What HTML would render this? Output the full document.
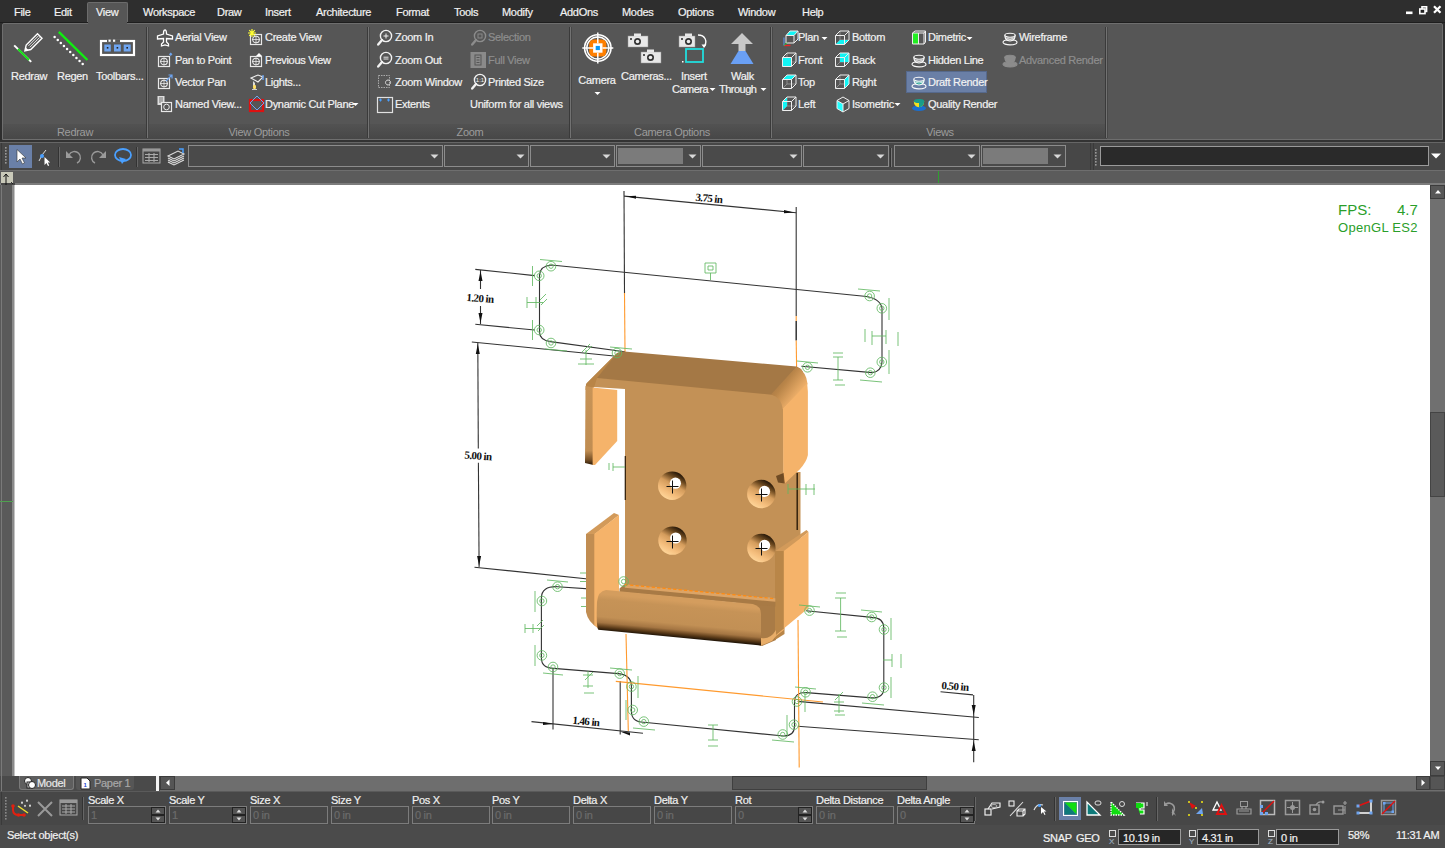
<!DOCTYPE html><html><head><meta charset="utf-8"><style>
*{margin:0;padding:0;box-sizing:border-box}
html,body{width:1445px;height:848px;overflow:hidden;background:#2e2e2e;font-family:"Liberation Sans",sans-serif;font-size:11px;color:#f2f2f2}
.a{position:absolute}
.t{position:absolute;white-space:nowrap;letter-spacing:-0.3px;line-height:12px;-webkit-text-stroke:0.2px currentColor}
.dis{color:#8e8e8e}
.gl{position:absolute;white-space:nowrap;color:#9c9c9c;letter-spacing:-0.3px;line-height:12px}
svg{position:absolute;overflow:visible}
</style></head><body><div class="a" style="left:0px;top:0px;width:1445px;height:24px;background:#2e2e2e"></div><div class="a" style="left:87px;top:2px;width:41px;height:22px;background:#565656;border:1px solid #6c6c6c;border-bottom:none;border-radius:2px 2px 0 0"></div><div class="t" style="left:14px;top:6px;">File</div><div class="t" style="left:54px;top:6px;">Edit</div><div class="t" style="left:96px;top:6px;">View</div><div class="t" style="left:143px;top:6px;">Workspace</div><div class="t" style="left:217px;top:6px;">Draw</div><div class="t" style="left:265px;top:6px;">Insert</div><div class="t" style="left:316px;top:6px;">Architecture</div><div class="t" style="left:396px;top:6px;">Format</div><div class="t" style="left:454px;top:6px;">Tools</div><div class="t" style="left:502px;top:6px;">Modify</div><div class="t" style="left:560px;top:6px;">AddOns</div><div class="t" style="left:622px;top:6px;">Modes</div><div class="t" style="left:678px;top:6px;">Options</div><div class="t" style="left:738px;top:6px;">Window</div><div class="t" style="left:802px;top:6px;">Help</div><svg style="left:1400px;top:0px" width="45" height="20" viewBox="0 0 45 20"><rect x="6" y="11.5" width="6.5" height="2.6" fill="#fff"/><rect x="22" y="6.8" width="4.6" height="4.6" fill="none" stroke="#fff" stroke-width="1.6"/><rect x="19.8" y="9" width="5.2" height="4.6" fill="#222" stroke="#fff" stroke-width="1.6"/><path d="M34 6.2 L40.5 12.8 M40.5 6.2 L34 12.8" stroke="#fff" stroke-width="2.2"/></svg><div class="a" style="left:0px;top:22px;width:1445px;height:1px;background:#1e1e1e"></div><div class="a" style="left:2px;top:23px;width:1441px;height:117px;background:#565656;border:1px solid #6e6e6e;border-radius:2px 2px 0 0"></div><div class="a" style="left:88px;top:22px;width:39px;height:3px;background:#565656"></div><div class="a" style="left:3px;top:124px;width:1104px;height:15px;background:linear-gradient(#525252,#474747)"></div><div class="a" style="left:146px;top:27px;width:1px;height:111px;background:#3a3a3a"></div><div class="a" style="left:147px;top:27px;width:1px;height:111px;background:#727272"></div><div class="a" style="left:148px;top:27px;width:1px;height:111px;background:#474747"></div><div class="a" style="left:367px;top:27px;width:1px;height:111px;background:#3a3a3a"></div><div class="a" style="left:368px;top:27px;width:1px;height:111px;background:#727272"></div><div class="a" style="left:369px;top:27px;width:1px;height:111px;background:#474747"></div><div class="a" style="left:569px;top:27px;width:1px;height:111px;background:#3a3a3a"></div><div class="a" style="left:570px;top:27px;width:1px;height:111px;background:#727272"></div><div class="a" style="left:571px;top:27px;width:1px;height:111px;background:#474747"></div><div class="a" style="left:770px;top:27px;width:1px;height:111px;background:#3a3a3a"></div><div class="a" style="left:771px;top:27px;width:1px;height:111px;background:#727272"></div><div class="a" style="left:772px;top:27px;width:1px;height:111px;background:#474747"></div><div class="a" style="left:1105px;top:27px;width:1px;height:111px;background:#3a3a3a"></div><div class="a" style="left:1106px;top:27px;width:1px;height:111px;background:#727272"></div><div class="a" style="left:1107px;top:27px;width:1px;height:111px;background:#474747"></div><div class="gl" style="left:15px;top:126px;width:120px;text-align:center">Redraw</div><div class="gl" style="left:199px;top:126px;width:120px;text-align:center">View Options</div><div class="gl" style="left:410px;top:126px;width:120px;text-align:center">Zoom</div><div class="gl" style="left:612px;top:126px;width:120px;text-align:center">Camera Options</div><div class="gl" style="left:880px;top:126px;width:120px;text-align:center">Views</div><svg style="left:10px;top:30px" width="38" height="36" viewBox="0 0 38 36"><line x1="4.2" y1="15.4" x2="21.2" y2="31.9" stroke="#fff" stroke-width="2"/><line x1="8" y1="19" x2="19" y2="30" stroke="#11dd11" stroke-width="2"/><g transform="translate(14.9,20.8) rotate(-45)"><path d="M0 0 L5 -3.2 L21 -3.2 L21 3.2 L5 3.2 Z" fill="#565656" stroke="#fff" stroke-width="1.4"/><line x1="6" y1="-1" x2="20" y2="-1" stroke="#fff" stroke-width="0.8"/><line x1="6" y1="1" x2="20" y2="1" stroke="#fff" stroke-width="0.8"/><path d="M0 0 L3 -2 L3 2Z" fill="#fff"/></g></svg><svg style="left:50px;top:28px" width="42" height="40" viewBox="0 0 42 40"><circle cx="4.60" cy="8.90" r="1.25" fill="#fff"/><circle cx="7.72" cy="11.92" r="1.25" fill="#fff"/><circle cx="10.84" cy="14.94" r="1.25" fill="#fff"/><circle cx="13.96" cy="17.96" r="1.25" fill="#fff"/><circle cx="17.08" cy="20.98" r="1.25" fill="#fff"/><circle cx="20.20" cy="24.00" r="1.25" fill="#fff"/><circle cx="23.32" cy="27.02" r="1.25" fill="#fff"/><circle cx="26.44" cy="30.04" r="1.25" fill="#fff"/><circle cx="29.56" cy="33.06" r="1.25" fill="#fff"/><circle cx="32.68" cy="36.08" r="1.25" fill="#fff"/><line x1="8.8" y1="3.9" x2="37.4" y2="32" stroke="#11ee11" stroke-width="2.4"/></svg><svg style="left:98px;top:36px" width="40" height="24" viewBox="0 0 40 24"><rect x="3" y="5" width="33" height="14" fill="none" stroke="#fff" stroke-width="2.2"/><rect x="9" y="3.5" width="13" height="3" fill="#565656"/><rect x="10.5" y="3.6" width="2.2" height="2.2" fill="#fff"/><rect x="15" y="3.6" width="2.2" height="2.2" fill="#fff"/><rect x="6.3" y="8.5" width="6.5" height="7" fill="#6fa5f0"/><rect x="16" y="8.5" width="6.8" height="7" fill="#6fa5f0"/><rect x="25.7" y="8.5" width="7" height="7" fill="#6fa5f0"/><rect x="8.8" y="11" width="1.6" height="1.6" fill="#222"/><rect x="18.6" y="11" width="1.6" height="1.6" fill="#222"/><rect x="28.4" y="11" width="1.6" height="1.6" fill="#222"/></svg><div class="t" style="left:11px;top:70px;">Redraw</div><div class="t" style="left:57px;top:70px;">Regen</div><div class="t" style="left:96px;top:70px;">Toolbars...</div><svg style="left:156px;top:29px" width="18" height="18" viewBox="0 0 18 18"><path d="M9 1 C10.5 1 10.5 3 10.5 5 L16.5 7 L16.5 10 L10.5 9.5 L10.5 13 L12.5 15 L12.5 17 L9 16 L5.5 17 L5.5 15 L7.5 13 L7.5 9.5 L1.5 10 L1.5 7 L7.5 5 C7.5 3 7.5 1 9 1Z" fill="#565656" stroke="#fff" stroke-width="1.3"/></svg><div class="t" style="left:175px;top:31.2px;">Aerial View</div><svg style="left:156px;top:51px" width="18" height="18" viewBox="0 0 18 18"><rect x="2.5" y="5.5" width="11" height="10" fill="none" stroke="#e8e8e8" stroke-width="1.2"/><circle cx="8" cy="10.5" r="3.3" fill="none" stroke="#e8e8e8" stroke-width="1.1"/><path d="M8 6.5V14.5M4 10.5H12" stroke="#e8e8e8" stroke-width="0.8"/><rect x="13.5" y="2" width="2.5" height="2.5" fill="#6fa5f0" transform="rotate(45 14.7 3.2)"/></svg><div class="t" style="left:175px;top:53.6px;">Pan to Point</div><svg style="left:156px;top:73px" width="18" height="18" viewBox="0 0 18 18"><rect x="2.5" y="5.5" width="11" height="10" fill="none" stroke="#e8e8e8" stroke-width="1.2"/><circle cx="8" cy="10.5" r="3.3" fill="none" stroke="#e8e8e8" stroke-width="1.1"/><path d="M8 6.5V14.5M4 10.5H12" stroke="#e8e8e8" stroke-width="0.8"/><path d="M10 8 L16 2 M12.5 2 H16 V5.5" stroke="#6fa5f0" stroke-width="1.2" fill="none"/></svg><div class="t" style="left:175px;top:76px;">Vector Pan</div><svg style="left:156px;top:95px" width="18" height="18" viewBox="0 0 18 18"><rect x="1.5" y="1" width="7" height="9" fill="#ddd"/><path d="M3 3H7M3 5H7M3 7H7" stroke="#555" stroke-width="0.8"/><rect x="5.5" y="7.5" width="10" height="9" fill="#565656" stroke="#e8e8e8" stroke-width="1.2"/><circle cx="10.5" cy="12" r="2.8" fill="none" stroke="#e8e8e8"/></svg><div class="t" style="left:175px;top:98.4px;">Named View...</div><svg style="left:248px;top:29px" width="18" height="18" viewBox="0 0 18 18"><rect x="2.5" y="5.5" width="11" height="10" fill="none" stroke="#e8e8e8" stroke-width="1.2"/><circle cx="8" cy="10.5" r="3.3" fill="none" stroke="#e8e8e8" stroke-width="1.1"/><path d="M8 6.5V14.5M4 10.5H12" stroke="#e8e8e8" stroke-width="0.8"/><g stroke="#ffff33" stroke-width="1.2"><path d="M4 0V8M0 4H8M1.2 1.2L6.8 6.8M6.8 1.2L1.2 6.8"/></g></svg><div class="t" style="left:265px;top:31.2px;">Create View</div><svg style="left:248px;top:51px" width="18" height="18" viewBox="0 0 18 18"><rect x="2.5" y="5.5" width="11" height="10" fill="none" stroke="#e8e8e8" stroke-width="1.2"/><circle cx="8" cy="10.5" r="3.3" fill="none" stroke="#e8e8e8" stroke-width="1.1"/><path d="M8 6.5V14.5M4 10.5H12" stroke="#e8e8e8" stroke-width="0.8"/><path d="M8 5 L11 2 L14 5Z" fill="#fff"/></svg><div class="t" style="left:265px;top:53.6px;">Previous View</div><svg style="left:248px;top:73px" width="18" height="18" viewBox="0 0 18 18"><path d="M3 5 L10 2 L15 4 L10 9 Z" fill="#565656" stroke="#eee" stroke-width="1.1"/><path d="M15 2V7" stroke="#6fa5f0" stroke-width="1.4"/><path d="M5 8 L7 10 L7 13 L5 13Z" fill="#ddd"/><ellipse cx="6.5" cy="14" rx="1.6" ry="2.3" fill="#ffe066"/><path d="M4 16.5H9" stroke="#ccc"/></svg><div class="t" style="left:265px;top:76px;">Lights...</div><svg style="left:248px;top:95px" width="18" height="18" viewBox="0 0 18 18"><rect x="2" y="5" width="13" height="11" fill="none" stroke="#dd1111" stroke-width="2.2"/><path d="M9 1 L16 8 L9 15 L2 8Z" fill="none" stroke="#6fa5f0" stroke-width="1"/></svg><div class="t" style="left:265px;top:98.4px;">Dynamic Cut Plane</div><svg style="left:352px;top:102px" width="7" height="5" viewBox="0 0 7 5"><path d="M0.5 1H6.5L3.5 4Z" fill="#fff"/></svg><svg style="left:376px;top:29px" width="18" height="18" viewBox="0 0 18 18"><circle cx="10" cy="7" r="5.6" fill="#565656" stroke="#f2f2f2" stroke-width="1.4"/><path d="M6 11 L2.2 15.5" stroke="#f2f2f2" stroke-width="2.4" stroke-linecap="round"/><path d="M10 4.5V9.5M7.5 7H12.5" stroke="#f2f2f2" stroke-width="1"/></svg><div class="t" style="left:395px;top:31.2px;">Zoom In</div><svg style="left:376px;top:51px" width="18" height="18" viewBox="0 0 18 18"><circle cx="10" cy="7" r="5.6" fill="#565656" stroke="#f2f2f2" stroke-width="1.4"/><path d="M6 11 L2.2 15.5" stroke="#f2f2f2" stroke-width="2.4" stroke-linecap="round"/><path d="M7.5 6.2H12.5M7.5 8H12.5" stroke="#f2f2f2" stroke-width="0.9"/></svg><div class="t" style="left:395px;top:53.6px;">Zoom Out</div><svg style="left:376px;top:73px" width="18" height="18" viewBox="0 0 18 18"><rect x="2.5" y="2.5" width="11" height="12" fill="none" stroke="#aaa" stroke-width="1" stroke-dasharray="1.5 1"/><path d="M12 12 a2.5 2.5 0 1 1 0.1 0" fill="none" stroke="#ddd"/></svg><div class="t" style="left:395px;top:76px;">Zoom Window</div><svg style="left:376px;top:95px" width="18" height="18" viewBox="0 0 18 18"><rect x="1.5" y="2.5" width="15" height="15" fill="none" stroke="#e0e0e0" stroke-width="1.2"/><path d="M3 5H6M4.5 3.5V6.5M11 5H14M12.5 3.5V6.5" stroke="#4aa0ff" stroke-width="1.1"/></svg><div class="t" style="left:395px;top:98.4px;">Extents</div><svg style="left:470px;top:29px" width="18" height="18" viewBox="0 0 18 18"><circle cx="10" cy="7" r="5.6" fill="#565656" stroke="#8c8c8c" stroke-width="1.4"/><path d="M6 11 L2.2 15.5" stroke="#8c8c8c" stroke-width="2.4" stroke-linecap="round"/><rect x="8" y="5" width="4" height="4" fill="none" stroke="#888"/></svg><div class="t dis" style="left:488px;top:31.2px;">Selection</div><svg style="left:470px;top:51px" width="18" height="18" viewBox="0 0 18 18"><rect x="0.5" y="1" width="15.5" height="16" fill="#8a8a8a"/><rect x="5" y="4" width="6" height="10" fill="none" stroke="#555" stroke-width="1"/><path d="M6.5 6.5H9.5M6.5 9H9.5M6.5 11.5H9.5" stroke="#555"/></svg><div class="t dis" style="left:488px;top:53.6px;">Full View</div><svg style="left:470px;top:73px" width="18" height="18" viewBox="0 0 18 18"><circle cx="10" cy="7" r="5.6" fill="#565656" stroke="#f2f2f2" stroke-width="1.4"/><path d="M6 11 L2.2 15.5" stroke="#f2f2f2" stroke-width="2.4" stroke-linecap="round"/><text x="10" y="9.3" font-size="6" text-anchor="middle" fill="#f2f2f2" font-family="Liberation Sans">1:1</text></svg><div class="t" style="left:488px;top:76px;">Printed Size</div><div class="t" style="left:470px;top:98.4px;">Uniform for all views</div><svg style="left:580px;top:30px" width="36" height="36" viewBox="0 0 36 36"><circle cx="17.8" cy="18" r="13.2" fill="none" stroke="#fff" stroke-width="1.6"/><circle cx="17.8" cy="18" r="11" fill="none" stroke="#fff" stroke-width="1.4"/><rect x="9.2" y="9.4" width="17.2" height="17.2" rx="5" fill="#ff7f00"/><rect x="13.1" y="13.3" width="9.4" height="9.4" fill="#fff"/><rect x="15.7" y="15.9" width="4.2" height="4.2" fill="#0a98f5"/><path d="M17.8 2.5V13.3 M17.8 22.7V33.5 M2.3 18H13.1 M22.5 18H33.3" stroke="#fff" stroke-width="1.5"/></svg><div class="t" style="left:567px;top:74px;width:60px;text-align:center">Camera</div><svg style="left:594px;top:91px" width="7" height="5" viewBox="0 0 7 5"><path d="M0.5 1H6.5L3.5 4Z" fill="#fff"/></svg><svg style="left:626px;top:31px" width="40" height="38" viewBox="0 0 40 38"><g transform="translate(2,2)"><rect x="0" y="3" width="20" height="11" fill="#e8e8e8" stroke="#999" stroke-width="0.5"/><rect x="6" y="0.5" width="7" height="3" fill="#e8e8e8"/><circle cx="9.5" cy="8.5" r="3.5" fill="#333"/><circle cx="9.5" cy="8.5" r="1.8" fill="#eee"/><rect x="2" y="5" width="2" height="2" fill="#555"/></g><g transform="translate(15,18)"><rect x="0" y="3" width="20" height="11" fill="#e8e8e8" stroke="#999" stroke-width="0.5"/><rect x="6" y="0.5" width="7" height="3" fill="#e8e8e8"/><circle cx="9.5" cy="8.5" r="3.5" fill="#333"/><circle cx="9.5" cy="8.5" r="1.8" fill="#eee"/><rect x="2" y="5" width="2" height="2" fill="#555"/></g></svg><div class="t" style="left:621px;top:70px;">Cameras...</div><svg style="left:678px;top:31px" width="38" height="38" viewBox="0 0 38 38"><g transform="translate(1,2)"><rect x="0" y="3" width="16" height="11" fill="#e8e8e8" stroke="#999" stroke-width="0.5"/><rect x="6" y="0.5" width="7" height="3" fill="#e8e8e8"/><circle cx="9.5" cy="8.5" r="3.5" fill="#333"/><circle cx="9.5" cy="8.5" r="1.8" fill="#eee"/><rect x="2" y="5" width="2" height="2" fill="#555"/></g><rect x="8" y="18" width="17" height="13" fill="none" stroke="#22dddd" stroke-width="1.8"/><path d="M20 4 C27 4 30 10 26 16" fill="none" stroke="#fff" stroke-width="1.3"/><path d="M23.5 13.5 L26 17 L28.5 13.5Z" fill="#fff"/><rect x="4" y="30" width="1.5" height="1.5" fill="#fff"/></svg><div class="t" style="left:681px;top:70px;">Insert</div><div class="t" style="left:672px;top:83px;letter-spacing:-0.5px">Camera</div><svg style="left:709px;top:87px" width="7" height="5" viewBox="0 0 7 5"><path d="M0.5 1H6.5L3.5 4Z" fill="#fff"/></svg><svg style="left:728px;top:32px" width="28" height="34" viewBox="0 0 28 34"><path d="M14 1 L25 12 L17.5 12 L17.5 19 L10.5 19 L10.5 12 L3 12Z" fill="#c8c8c8"/><path d="M10.5 19 L17.5 19 L25.5 32 L2.5 32Z" fill="#6aa0f5"/></svg><div class="t" style="left:731px;top:70px;">Walk</div><div class="t" style="left:719px;top:83px;letter-spacing:-0.5px">Through</div><svg style="left:760px;top:87px" width="7" height="5" viewBox="0 0 7 5"><path d="M0.5 1H6.5L3.5 4Z" fill="#fff"/></svg><svg style="left:782px;top:52px" width="16" height="16" viewBox="0 0 16 16"></svg><svg style="left:783px;top:30px" width="16" height="16" viewBox="0 0 16 16"><polygon points="3,5.5 7,1 15,1 11,5.5" fill="#11f5f5"/><path d="M3 5.5H11V13H3Z M7 1H15V9 M3 5.5L7 1 M11 5.5L15 1 M11 13L15 9" fill="none" stroke="#eee"/><path d="M1 15.5H7.5" stroke="#e22" stroke-width="1.3"/><path d="M1 15.5V7.5" stroke="#5a8fe0" stroke-width="1.2"/><path d="M1 15.5L4 12.5" stroke="#2c2" stroke-width="1"/></svg><div class="t" style="left:798px;top:31.2px;">Plan</div><svg style="left:821px;top:36px" width="7" height="5" viewBox="0 0 7 5"><path d="M0.5 1H6.5L3.5 4Z" fill="#fff"/></svg><svg style="left:782px;top:52px" width="16" height="16" viewBox="0 0 16 16"><path d="M5 1V10H14 M5 10L0.5 14.5" fill="none" stroke="#9a9a9a" stroke-width="0.8"/><polygon points="0.5,5.5 9.5,5.5 9.5,14.5 0.5,14.5" fill="#11f5f5"/><path d="M0.5 5.5H9.5V14.5H0.5Z M5 1H14V10 M0.5 5.5L5 1 M9.5 5.5L14 1 M9.5 14.5L14 10" fill="none" stroke="#eeeeee" stroke-width="1"/></svg><div class="t" style="left:798px;top:53.6px;">Front</div><svg style="left:782px;top:74px" width="16" height="16" viewBox="0 0 16 16"><path d="M5 1V10H14 M5 10L0.5 14.5" fill="none" stroke="#9a9a9a" stroke-width="0.8"/><polygon points="0.5,5.5 5,1 14,1 9.5,5.5" fill="#11f5f5"/><path d="M0.5 5.5H9.5V14.5H0.5Z M5 1H14V10 M0.5 5.5L5 1 M9.5 5.5L14 1 M9.5 14.5L14 10" fill="none" stroke="#eeeeee" stroke-width="1"/></svg><div class="t" style="left:798px;top:76px;">Top</div><svg style="left:782px;top:96px" width="16" height="16" viewBox="0 0 16 16"><path d="M5 1V10H14 M5 10L0.5 14.5" fill="none" stroke="#9a9a9a" stroke-width="0.8"/><polygon points="0.5,5.5 5,1 5,10 0.5,14.5" fill="#11f5f5"/><path d="M0.5 5.5H9.5V14.5H0.5Z M5 1H14V10 M0.5 5.5L5 1 M9.5 5.5L14 1 M9.5 14.5L14 10" fill="none" stroke="#eeeeee" stroke-width="1"/></svg><div class="t" style="left:798px;top:98.4px;">Left</div><svg style="left:835px;top:30px" width="16" height="16" viewBox="0 0 16 16"><path d="M5 1V10H14 M5 10L0.5 14.5" fill="none" stroke="#9a9a9a" stroke-width="0.8"/><polygon points="0.5,14.5 5,10 14,10 9.5,14.5" fill="#11f5f5"/><path d="M0.5 5.5H9.5V14.5H0.5Z M5 1H14V10 M0.5 5.5L5 1 M9.5 5.5L14 1 M9.5 14.5L14 10" fill="none" stroke="#eeeeee" stroke-width="1"/></svg><div class="t" style="left:852px;top:31.2px;">Bottom</div><svg style="left:835px;top:52px" width="16" height="16" viewBox="0 0 16 16"><path d="M5 1V10H14 M5 10L0.5 14.5" fill="none" stroke="#9a9a9a" stroke-width="0.8"/><polygon points="5,1 14,1 14,10 5,10" fill="#11f5f5"/><path d="M0.5 5.5H9.5V14.5H0.5Z M5 1H14V10 M0.5 5.5L5 1 M9.5 5.5L14 1 M9.5 14.5L14 10" fill="none" stroke="#eeeeee" stroke-width="1"/></svg><div class="t" style="left:852px;top:53.6px;">Back</div><svg style="left:835px;top:74px" width="16" height="16" viewBox="0 0 16 16"><path d="M5 1V10H14 M5 10L0.5 14.5" fill="none" stroke="#9a9a9a" stroke-width="0.8"/><polygon points="9.5,5.5 14,1 14,10 9.5,14.5" fill="#11f5f5"/><path d="M0.5 5.5H9.5V14.5H0.5Z M5 1H14V10 M0.5 5.5L5 1 M9.5 5.5L14 1 M9.5 14.5L14 10" fill="none" stroke="#eeeeee" stroke-width="1"/></svg><div class="t" style="left:852px;top:76px;">Right</div><svg style="left:835px;top:96px" width="16" height="16" viewBox="0 0 16 16"><polygon points="8,8 8,16 2,12.5 2,4.5" fill="#22ffff"/><path d="M8 1L14 4.5V12.5L8 16L2 12.5V4.5Z M8 8V16 M8 8L14 4.5 M8 8L2 4.5" fill="none" stroke="#f0f0f0"/></svg><div class="t" style="left:852px;top:98.4px;">Isometric</div><svg style="left:894px;top:102px" width="7" height="5" viewBox="0 0 7 5"><path d="M0.5 1H6.5L3.5 4Z" fill="#fff"/></svg><div class="a" style="left:906px;top:71px;width:81px;height:22px;background:#6a7fa6;border:1px solid #56698c"></div><svg style="left:911px;top:30px" width="16" height="16" viewBox="0 0 16 16"><rect x="1.5" y="3" width="6" height="11" fill="#22ee22"/><path d="M1.5 3H13V14H1.5Z M7.5 3V14 M1.5 3 L4 1H14.5L13 3 M14.5 1V12L13 14" fill="none" stroke="#f0f0f0"/></svg><div class="t" style="left:928px;top:31.2px;">Dimetric</div><svg style="left:966px;top:36px" width="7" height="5" viewBox="0 0 7 5"><path d="M0.5 1H6.5L3.5 4Z" fill="#fff"/></svg><svg style="left:911px;top:52px" width="16" height="16" viewBox="0 0 16 16"><ellipse cx="8" cy="12.3" rx="7" ry="2.6" fill="none" stroke="#fafafa" stroke-width="1.1"/><path d="M2.8 5.2 Q3 10.8 8 11 Q13 10.8 13.2 5.2" fill="none" stroke="#fafafa" stroke-width="1.1"/><ellipse cx="8" cy="5.2" rx="5.2" ry="2" fill="none" stroke="#fafafa" stroke-width="1.1"/><path d="M3.5 8 Q8 10 12.5 8" fill="none" stroke="#fafafa" stroke-width="0.8"/></svg><div class="t" style="left:928px;top:53.6px;">Hidden Line</div><svg style="left:911px;top:74px" width="16" height="16" viewBox="0 0 16 16"><ellipse cx="8" cy="12.3" rx="7" ry="2.6" fill="none" stroke="#fafafa" stroke-width="1.1"/><path d="M2.8 5.2 Q3 10.8 8 11 Q13 10.8 13.2 5.2" fill="#179c8c" stroke="#fafafa" stroke-width="1.1"/><ellipse cx="8" cy="5.2" rx="5.2" ry="2" fill="#6a7fa6" stroke="#fafafa" stroke-width="1.1"/><path d="M3.5 8 Q8 10 12.5 8" fill="none" stroke="#fafafa" stroke-width="0.8"/></svg><div class="t" style="left:928px;top:76px;">Draft Render</div><svg style="left:911px;top:96px" width="16" height="16" viewBox="0 0 16 16"><ellipse cx="8" cy="12.3" rx="7" ry="2.8" fill="#1a6fd0"/><path d="M2.8 5 Q3 11 8 11.3 Q13 11 13.2 5Z" fill="#f2e020"/><path d="M8 3 L13.2 5 Q13 11 8 11.3Z" fill="#17a08a"/><ellipse cx="8" cy="5" rx="5.2" ry="2" fill="#1a9a8a"/></svg><div class="t" style="left:928px;top:98.4px;">Quality Render</div><svg style="left:1002px;top:30px" width="16" height="16" viewBox="0 0 16 16"><ellipse cx="8" cy="12.3" rx="7" ry="2.6" fill="none" stroke="#fafafa" stroke-width="1.1"/><path d="M2.8 5.2 Q3 10.8 8 11 Q13 10.8 13.2 5.2" fill="none" stroke="#fafafa" stroke-width="1.1"/><ellipse cx="8" cy="5.2" rx="5.2" ry="2" fill="none" stroke="#fafafa" stroke-width="1.1"/><path d="M3.5 8 Q8 10 12.5 8" fill="none" stroke="#fafafa" stroke-width="0.8"/></svg><div class="t" style="left:1019px;top:31.2px;">Wireframe</div><svg style="left:1002px;top:52px" width="16" height="16" viewBox="0 0 16 16"><ellipse cx="8" cy="12.3" rx="7" ry="2.6" fill="#8c8c8c" stroke="#8c8c8c" stroke-width="1.1"/><path d="M2.8 5.2 Q3 10.8 8 11 Q13 10.8 13.2 5.2" fill="#8c8c8c" stroke="#8c8c8c" stroke-width="1.1"/><ellipse cx="8" cy="5.2" rx="5.2" ry="2" fill="#8c8c8c" stroke="#8c8c8c" stroke-width="1.1"/><path d="M3.5 8 Q8 10 12.5 8" fill="none" stroke="#8c8c8c" stroke-width="0.8"/></svg><div class="t dis" style="left:1019px;top:53.6px;">Advanced Render</div><div class="a" style="left:0px;top:140px;width:1445px;height:2px;background:#333"></div><div class="a" style="left:0px;top:142px;width:1445px;height:1px;background:#666"></div><div class="a" style="left:0px;top:143px;width:1445px;height:27px;background:#474747"></div><div class="a" style="left:1px;top:143px;width:1090px;height:27px;border-left:1px solid #3a3a3a;border-right:1px solid #3a3a3a"></div><div class="a" style="left:1093px;top:143px;width:352px;height:27px;border-left:1px solid #3a3a3a"></div><div class="a" style="left:0px;top:170px;width:1445px;height:1px;background:#6e6e6e"></div><div class="a" style="left:0px;top:171px;width:1445px;height:12px;background:#5b5b5b"></div><div class="a" style="left:0px;top:183px;width:1445px;height:2px;background:#7c7c7c"></div><svg style="left:4px;top:146px" width="4" height="18" viewBox="0 0 4 18"><rect x="1" y="1" width="1.6" height="1.6" fill="#9a9a9a"/><rect x="1" y="4" width="1.6" height="1.6" fill="#9a9a9a"/><rect x="1" y="7" width="1.6" height="1.6" fill="#9a9a9a"/><rect x="1" y="10" width="1.6" height="1.6" fill="#9a9a9a"/><rect x="1" y="13" width="1.6" height="1.6" fill="#9a9a9a"/><rect x="1" y="16" width="1.6" height="1.6" fill="#9a9a9a"/></svg><svg style="left:1094px;top:148px" width="4" height="18" viewBox="0 0 4 18"><rect x="1" y="1" width="1.6" height="1.6" fill="#9a9a9a"/><rect x="1" y="4" width="1.6" height="1.6" fill="#9a9a9a"/><rect x="1" y="7" width="1.6" height="1.6" fill="#9a9a9a"/><rect x="1" y="10" width="1.6" height="1.6" fill="#9a9a9a"/><rect x="1" y="13" width="1.6" height="1.6" fill="#9a9a9a"/><rect x="1" y="16" width="1.6" height="1.6" fill="#9a9a9a"/></svg><div class="a" style="left:9px;top:145px;width:23px;height:23px;background:#6a80a8"></div><svg style="left:14px;top:148px" width="14" height="18" viewBox="0 0 14 18"><path d="M3 1.5 L3 14 L6 11 L8.5 16 L10.5 15 L8 10 L12 10Z" fill="#fff" stroke="#333" stroke-width="0.6"/></svg><svg style="left:36px;top:148px" width="18" height="18" viewBox="0 0 18 18"><path d="M3 13 Q6 6 10 2" fill="none" stroke="#ddd" stroke-width="1"/><circle cx="6" cy="8" r="2" fill="#4aa0ff"/><path d="M8.5 9 L8.5 17 L10.5 15 L12 18 L13.2 17.4 L11.8 14.5 L14.2 14.5Z" fill="#fff"/></svg><div class="a" style="left:58px;top:147px;width:2px;height:20px;background:#333;border-right:1px solid #666"></div><svg style="left:64px;top:148px" width="20" height="16" viewBox="0 0 20 16"><path d="M2 3 L2 10 L9 10Z" fill="#9a9a9a"/><path d="M5 7 A6 6 0 1 1 13 15" fill="none" stroke="#9a9a9a" stroke-width="1.4"/></svg><svg style="left:88px;top:148px" width="20" height="16" viewBox="0 0 20 16"><path d="M18 3 L18 10 L11 10Z" fill="#9a9a9a"/><path d="M15 7 A6 6 0 1 0 7 15" fill="none" stroke="#9a9a9a" stroke-width="1.4"/></svg><svg style="left:112px;top:147px" width="22" height="18" viewBox="0 0 22 18"><ellipse cx="11" cy="8" rx="8" ry="6" fill="none" stroke="#4aa0ff" stroke-width="1.8"/><path d="M7 10 L10 17 L14 12Z" fill="#4aa0ff"/></svg><div class="a" style="left:136px;top:147px;width:2px;height:20px;background:#333;border-right:1px solid #666"></div><svg style="left:142px;top:148px" width="19" height="16" viewBox="0 0 19 16"><rect x="1" y="1" width="17" height="14" fill="none" stroke="#aaa" stroke-width="1"/><rect x="1" y="1" width="17" height="2.5" fill="#999"/><path d="M3 6.5H16M3 9.5H16M3 12.5H16M7 5V14M12 5V14" stroke="#aaa" stroke-width="1.1"/></svg><svg style="left:166px;top:147px" width="20" height="19" viewBox="0 0 20 19"><path d="M2 9 L12 4 L18 7 L8 12Z M2 11 L8 14 L18 9 M2 13 L8 16 L18 11 M2 15 L8 18 L18 13" fill="none" stroke="#ddd" stroke-width="1.1"/><path d="M13 2 H17 V6" stroke="#4aa0ff" stroke-width="1.5" fill="none"/></svg><div class="a" style="left:188px;top:145px;width:255px;height:22px;background:#4a4a4a;border:1px solid #8c8c8c"></div><svg style="left:430px;top:154px" width="9" height="5" viewBox="0 0 9 5"><path d="M0.5 0.5H8.5L4.5 4.5Z" fill="#d8d8d8"/></svg><div class="a" style="left:444px;top:145px;width:85px;height:22px;background:#4a4a4a;border:1px solid #8c8c8c"></div><svg style="left:516px;top:154px" width="9" height="5" viewBox="0 0 9 5"><path d="M0.5 0.5H8.5L4.5 4.5Z" fill="#d8d8d8"/></svg><div class="a" style="left:530px;top:145px;width:85px;height:22px;background:#4a4a4a;border:1px solid #8c8c8c"></div><svg style="left:602px;top:154px" width="9" height="5" viewBox="0 0 9 5"><path d="M0.5 0.5H8.5L4.5 4.5Z" fill="#d8d8d8"/></svg><div class="a" style="left:616px;top:145px;width:85px;height:22px;background:#4a4a4a;border:1px solid #8c8c8c"></div><div class="a" style="left:618px;top:148px;width:65px;height:16px;background:#7b7b7b"></div><svg style="left:688px;top:154px" width="9" height="5" viewBox="0 0 9 5"><path d="M0.5 0.5H8.5L4.5 4.5Z" fill="#d8d8d8"/></svg><div class="a" style="left:702px;top:145px;width:100px;height:22px;background:#4a4a4a;border:1px solid #8c8c8c"></div><svg style="left:789px;top:154px" width="9" height="5" viewBox="0 0 9 5"><path d="M0.5 0.5H8.5L4.5 4.5Z" fill="#d8d8d8"/></svg><div class="a" style="left:803px;top:145px;width:86px;height:22px;background:#4a4a4a;border:1px solid #8c8c8c"></div><svg style="left:876px;top:154px" width="9" height="5" viewBox="0 0 9 5"><path d="M0.5 0.5H8.5L4.5 4.5Z" fill="#d8d8d8"/></svg><div class="a" style="left:894px;top:145px;width:86px;height:22px;background:#4a4a4a;border:1px solid #8c8c8c"></div><svg style="left:967px;top:154px" width="9" height="5" viewBox="0 0 9 5"><path d="M0.5 0.5H8.5L4.5 4.5Z" fill="#d8d8d8"/></svg><div class="a" style="left:981px;top:145px;width:85px;height:22px;background:#4a4a4a;border:1px solid #8c8c8c"></div><div class="a" style="left:983px;top:148px;width:65px;height:16px;background:#7b7b7b"></div><svg style="left:1053px;top:154px" width="9" height="5" viewBox="0 0 9 5"><path d="M0.5 0.5H8.5L4.5 4.5Z" fill="#d8d8d8"/></svg><div class="a" style="left:890px;top:148px;width:2px;height:19px;background:#333;border-right:1px solid #777"></div><div class="a" style="left:1100px;top:146px;width:329px;height:20px;background:#2a2a2a;border:1px solid #9a9a9a"></div><svg style="left:1430px;top:153px" width="12" height="6" viewBox="0 0 12 6"><path d="M1 0.5H11L6 5.5Z" fill="#fff"/></svg><div class="a" style="left:1px;top:172px;width:12px;height:11px;background:#c9c9b9"></div><svg style="left:1px;top:172px" width="14" height="14" viewBox="0 0 14 14"><path d="M5 13V2 M2.5 5 L5 2 L7.5 5 M0 12H14" stroke="#111" stroke-width="1" fill="none"/><path d="M10 10 L12 12" stroke="#111" stroke-width="0.8"/></svg><div class="a" style="left:938px;top:171px;width:1px;height:12px;background:#2fa02f"></div><div class="a" style="left:0px;top:185px;width:14px;height:591px;background:#5a5a5a"></div><div class="a" style="left:1px;top:185px;width:1px;height:591px;background:#7a7a7a"></div><div class="a" style="left:12px;top:185px;width:2px;height:591px;background:#8a8a8a"></div><div class="a" style="left:14px;top:185px;width:1px;height:591px;background:#c4c4c4"></div><div class="a" style="left:0px;top:501px;width:13px;height:1px;background:#4fa04f"></div><div class="a" style="left:15px;top:185px;width:1415px;height:591px;background:#ffffff"></div><div class="a" style="left:1430px;top:185px;width:15px;height:591px;background:#707070"></div><div class="a" style="left:1430px;top:185px;width:15px;height:14px;background:#575757;border:1px solid #3c3c3c"></div><svg style="left:1434px;top:189px" width="8" height="5" viewBox="0 0 8 5"><path d="M1 4.5H7L4 1Z" fill="#fff"/></svg><div class="a" style="left:1430px;top:412px;width:15px;height:85px;background:#5a5a5a;border:1px solid #444"></div><div class="a" style="left:1430px;top:761px;width:15px;height:15px;background:#575757;border:1px solid #3c3c3c"></div><svg style="left:1434px;top:766px" width="8" height="5" viewBox="0 0 8 5"><path d="M1 0.5H7L4 4Z" fill="#fff"/></svg><svg style="left:0;top:0" width="1445" height="848" viewBox="0 0 1445 848"><defs><clipPath id="vp"><rect x="14" y="185" width="1416" height="591"/></clipPath></defs><g clip-path="url(#vp)"><path d="M624,191 L624.5,293" fill="none" stroke="#333" stroke-width="1.1" /><path d="M624.5,293 L625,352" fill="none" stroke="#ff9a2e" stroke-width="1.1" /><path d="M796.2,207 L796.2,316" fill="none" stroke="#333" stroke-width="1.1" /><path d="M796.2,316 L796.2,321" fill="none" stroke="#ff9a2e" stroke-width="1.1" /><path d="M796.2,321 L796.2,340.5" fill="none" stroke="#333" stroke-width="1.5" /><path d="M796.2,340.5 L796.6,367" fill="none" stroke="#ff9a2e" stroke-width="1.1" /><path d="M624,196.1 L796.2,212.7" fill="none" stroke="#333" stroke-width="1.1" /><path d="M626 196.3 L636 195.8 L636 198.8Z" fill="#111"/><path d="M794 212.5 L784 210 L784 213.2Z" fill="#111"/><text x="709" y="202" font-family="Liberation Serif" font-weight="bold" font-size="11" fill="#111" text-anchor="middle" letter-spacing="-0.6" transform="rotate(5.5 709 198)">3.75 in</text><path d="M551.4,265 L864.2,296.2 Q880,298 882,308 L882,362 Q881,372 872,372.6 L801.4,366.2 M624.7,351.7 L550.5,341.6 Q539.5,340 539.5,332 L539.5,275 Q540,266 551.4,265" fill="none" stroke="#333" stroke-width="1.1" /><path d="M475.3,269.4 L534.6,275.6" fill="none" stroke="#333" stroke-width="1.1" /><path d="M475.3,324.3 L534.6,330" fill="none" stroke="#333" stroke-width="1.1" /><path d="M480.5,270 L480.5,289" fill="none" stroke="#333" stroke-width="1.1" /><path d="M480.5,306 L480.5,324" fill="none" stroke="#333" stroke-width="1.1" /><path d="M480.5 271 L478.5 281 L482.5 281Z M480.5 323 L478.5 313 L482.5 313Z" fill="#111"/><text x="480" y="302" font-family="Liberation Serif" font-weight="bold" font-size="11" fill="#111" text-anchor="middle" letter-spacing="-0.6" transform="rotate(4 480 298)">1.20 in</text><path d="M471.8,342 L614,356" fill="none" stroke="#333" stroke-width="1.1" /><path d="M474.5,567.2 L600,580.2" fill="none" stroke="#333" stroke-width="1.1" /><path d="M477.8,343 L478.3,448.6" fill="none" stroke="#333" stroke-width="1.1" /><path d="M478.4,462.8 L479.1,567" fill="none" stroke="#333" stroke-width="1.1" /><path d="M477.8 344 L475.8 354 L479.8 354Z M479.1 566 L477.1 556 L481.1 556Z" fill="#111"/><text x="478" y="459.5" font-family="Liberation Serif" font-weight="bold" font-size="11" fill="#111" text-anchor="middle" letter-spacing="-0.6" transform="rotate(4 478 456)">5.00 in</text><path d="M600,589.6 L557.5,586.7 Q541.4,586 541.4,598 L541.4,658 Q541.4,668 553.6,668.4 L618.4,673.6 Q631.4,675 631.4,686 L631.4,711 Q631.4,722 643.6,722.2 L783.5,736 Q794.5,736 794.5,726 L794.5,702 Q794.5,692 806.5,692.6 L872,697.9 Q883.8,698 883.8,688 L883.8,628 Q883.8,618 872,617.4 L806,610.8" fill="none" stroke="#333" stroke-width="1.1" /><path d="M553,668.4 L553,729.4" fill="none" stroke="#333" stroke-width="1.1" /><path d="M620.2,681 L620.2,734.6" fill="none" stroke="#333" stroke-width="1.1" /><path d="M531.5,721.6 L643,733.3" fill="none" stroke="#333" stroke-width="1.1" /><path d="M553 724 L543 722 L543 725Z M620 731.5 L630 732.5 L630 735.5Z" fill="#111"/><text x="586" y="725" font-family="Liberation Serif" font-weight="bold" font-size="11" fill="#111" text-anchor="middle" letter-spacing="-0.6" transform="rotate(5 586 721)">1.46 in</text><path d="M797.7,701.4 L978.8,717.5" fill="none" stroke="#333" stroke-width="1.1" /><path d="M797.7,726.2 L978.8,739.8" fill="none" stroke="#333" stroke-width="1.1" /><path d="M973.7,694.9 L973.7,762.3" fill="none" stroke="#333" stroke-width="1.1" /><path d="M940.5,691.8 L973,694.9" fill="none" stroke="#333" stroke-width="1.1" /><path d="M973.7 715 L971.7 705 L975.7 705Z M973.7 741 L971.7 751 L975.7 751Z" fill="#111"/><text x="955" y="690" font-family="Liberation Serif" font-weight="bold" font-size="11" fill="#111" text-anchor="middle" letter-spacing="-0.6" transform="rotate(4 955 686)">0.50 in</text><path d="M626,634 L628.3,731" fill="none" stroke="#ff9a2e" stroke-width="1.1" /><path d="M798,620 L799.2,767.5" fill="none" stroke="#ff9a2e" stroke-width="1.1" /><path d="M615.8,681.4 L823,702" fill="none" stroke="#ff9a2e" stroke-width="1.1" /><path d="M580,573 H590 M580,581.5 H590 M581,598 H590 M581,606.5 H590" stroke="#62b862" stroke-width="0.85"/><defs><linearGradient id="gHole" x1="0.75" y1="0.05" x2="0.25" y2="0.95"><stop offset="0" stop-color="#1e1206"/><stop offset="0.22" stop-color="#6e4a20"/><stop offset="0.45" stop-color="#d49c5c"/><stop offset="0.75" stop-color="#f4bd7c"/><stop offset="1" stop-color="#ffd69a"/></linearGradient><linearGradient id="gBendR" x1="0.15" y1="0.1" x2="0.75" y2="0.65"><stop offset="0" stop-color="#9c7040"/><stop offset="0.45" stop-color="#b98549"/><stop offset="1" stop-color="#efb06a"/></linearGradient><linearGradient id="gTray" gradientUnits="userSpaceOnUse" x1="603.4" y1="594" x2="600" y2="630.5"><stop offset="0" stop-color="#d49d5e"/><stop offset="0.15" stop-color="#c69357"/><stop offset="0.62" stop-color="#c29055"/><stop offset="0.78" stop-color="#a57643"/><stop offset="0.9" stop-color="#5a3a18"/><stop offset="1" stop-color="#1a1005"/></linearGradient><linearGradient id="gLipBot" x1="0" y1="0" x2="0" y2="1"><stop offset="0" stop-color="#c89457"/><stop offset="0.82" stop-color="#c08d52"/><stop offset="0.93" stop-color="#7a5328"/><stop offset="1" stop-color="#2a1a08"/></linearGradient></defs><path d="M593,377 L772,392.5 Q783,396 783.6,410 L783.6,472 L800.5,472 L800.5,600 L625,588 L625,389 L593,387Z" fill="#c39156"/><path d="M797.2,473 L797.2,530" stroke="#2a1a08" stroke-width="1.4"/><path d="M625.3,456 L625.3,500" stroke="#2a1a08" stroke-width="1.2"/><path d="M617,353 Q620,351.3 624,351.5 L796.6,366.5 Q801,368 803,372 L785,392 L772,394.8 L597,378 L586,384 Z" fill="#a47845"/><path d="M617,353 L586,384 L585.5,390 L594,387.5 L597,378Z" fill="#b98547"/><path d="M585.5,386 L593.4,387.5 L593.4,465 L585,463Z" fill="url(#gLipBot)"/><path d="M592.6,387.5 L617.2,390 L617.2,441 L595,465 L592.6,465Z" fill="#f5b36a"/><path d="M771,394.5 L796.6,366.5 Q806.5,372 807.6,384 L783,409.5 Q781,397 771,394.5Z" fill="url(#gBendR)"/><path d="M783,408.5 L807.2,383.5 L807.9,392 L807.9,455 Q806.5,462 799.6,469.5 L784.8,483.6 L783.3,483Z" fill="#f5b36a"/><path d="M776,476 L783.6,473 L784.8,483.6 L778,482.5Z" fill="#5a3a18" opacity="0.8"/><path d="M586,534 L614,513 L619,515 L595,534Z" fill="#d29a5a"/><path d="M586,534 L595,534 L595,620 L598,628 Q588,622 586,612Z" fill="#c18d52"/><path d="M594.3,534 L619,515 L619,600 L600,630 L594.3,625Z" fill="#f5b36a"/><path d="M775.4,551 L806.5,530 L808.5,532 L784.5,551Z" fill="#d29a5a"/><path d="M740,596 L776,599 L776,640 L762,646 L740,640Z" fill="#a97b46"/><path d="M775,551 L784.5,551 L784.5,634 L775,640Z" fill="#b98648"/><path d="M783.8,551 L808.5,532 L808.5,608 L764,645 L783.8,630Z" fill="#f5b36a"/><path d="M619.5,588.5 L624.8,584.1 L775.4,598.2 L775.4,606.5 L752.8,604.5 L619.5,592Z" fill="#a87a45"/><path d="M624.8,584.1 L775.4,598.2 L775.4,601.8 L624.8,587.8Z" fill="#dca466"/><path d="M624.8,584.6 L775,598.6" stroke="#ff8a10" stroke-width="1.1" stroke-dasharray="3.2 2.2"/><path d="M606,590 L752.8,604 Q761,606 761,614 L761,645.6 L598.3,629.8 Q596,626 597,602 Q598,591 606,590Z" fill="url(#gTray)"/><path d="M761,645.6 L772,641 L776,636 L776,630 Q770,640 761,638Z" fill="#e8ad68"/><circle cx="672.2" cy="485.8" r="14.2" fill="url(#gHole)"/><ellipse cx="675.4000000000001" cy="483.2" rx="5.6" ry="5.6" fill="#fff"/><path d="M666.5,486.5 H678.5 M672.5,480.5 V493.5" stroke="#111" stroke-width="1"/><circle cx="761.3" cy="494" r="14.2" fill="url(#gHole)"/><ellipse cx="764.5" cy="491.4" rx="5.6" ry="5.6" fill="#fff"/><path d="M755.5,494.5 H767.5 M761.5,488.5 V501.5" stroke="#111" stroke-width="1"/><circle cx="672.5" cy="540.6" r="14.2" fill="url(#gHole)"/><ellipse cx="675.7" cy="538.0" rx="5.6" ry="5.6" fill="#fff"/><path d="M666.5,541.5 H678.5 M672.5,535.5 V548.5" stroke="#111" stroke-width="1"/><circle cx="761.4" cy="548" r="14.2" fill="url(#gHole)"/><ellipse cx="764.6" cy="545.4" rx="5.6" ry="5.6" fill="#fff"/><path d="M755.5,548.5 H767.5 M761.5,542.5 V555.5" stroke="#111" stroke-width="1"/><circle cx="539.2" cy="275.8" r="4.8" fill="none" stroke="#62b862" stroke-width="0.85"/><circle cx="539.2" cy="275.8" r="2.2" fill="none" stroke="#62b862" stroke-width="0.85"/><circle cx="551" cy="266.2" r="4.8" fill="none" stroke="#62b862" stroke-width="0.85"/><circle cx="551" cy="266.2" r="2.2" fill="none" stroke="#62b862" stroke-width="0.85"/><circle cx="539.2" cy="330" r="4.8" fill="none" stroke="#62b862" stroke-width="0.85"/><circle cx="539.2" cy="330" r="2.2" fill="none" stroke="#62b862" stroke-width="0.85"/><circle cx="551" cy="343" r="4.8" fill="none" stroke="#62b862" stroke-width="0.85"/><circle cx="551" cy="343" r="2.2" fill="none" stroke="#62b862" stroke-width="0.85"/><circle cx="617" cy="353" r="4.8" fill="none" stroke="#62b862" stroke-width="0.85"/><circle cx="617" cy="353" r="2.2" fill="none" stroke="#62b862" stroke-width="0.85"/><circle cx="869.6" cy="296" r="4.8" fill="none" stroke="#62b862" stroke-width="0.85"/><circle cx="869.6" cy="296" r="2.2" fill="none" stroke="#62b862" stroke-width="0.85"/><circle cx="881.8" cy="308.3" r="4.8" fill="none" stroke="#62b862" stroke-width="0.85"/><circle cx="881.8" cy="308.3" r="2.2" fill="none" stroke="#62b862" stroke-width="0.85"/><circle cx="881.8" cy="362" r="4.8" fill="none" stroke="#62b862" stroke-width="0.85"/><circle cx="881.8" cy="362" r="2.2" fill="none" stroke="#62b862" stroke-width="0.85"/><circle cx="870.3" cy="372.7" r="4.8" fill="none" stroke="#62b862" stroke-width="0.85"/><circle cx="870.3" cy="372.7" r="2.2" fill="none" stroke="#62b862" stroke-width="0.85"/><circle cx="807.5" cy="367.3" r="4.8" fill="none" stroke="#62b862" stroke-width="0.85"/><circle cx="807.5" cy="367.3" r="2.2" fill="none" stroke="#62b862" stroke-width="0.85"/><circle cx="557.5" cy="586.7" r="4.8" fill="none" stroke="#62b862" stroke-width="0.85"/><circle cx="557.5" cy="586.7" r="2.2" fill="none" stroke="#62b862" stroke-width="0.85"/><circle cx="541.9" cy="601" r="4.8" fill="none" stroke="#62b862" stroke-width="0.85"/><circle cx="541.9" cy="601" r="2.2" fill="none" stroke="#62b862" stroke-width="0.85"/><circle cx="541.9" cy="655.4" r="4.8" fill="none" stroke="#62b862" stroke-width="0.85"/><circle cx="541.9" cy="655.4" r="2.2" fill="none" stroke="#62b862" stroke-width="0.85"/><circle cx="553" cy="667" r="4.8" fill="none" stroke="#62b862" stroke-width="0.85"/><circle cx="553" cy="667" r="2.2" fill="none" stroke="#62b862" stroke-width="0.85"/><circle cx="619.7" cy="673.6" r="4.8" fill="none" stroke="#62b862" stroke-width="0.85"/><circle cx="619.7" cy="673.6" r="2.2" fill="none" stroke="#62b862" stroke-width="0.85"/><circle cx="631.4" cy="686.6" r="4.8" fill="none" stroke="#62b862" stroke-width="0.85"/><circle cx="631.4" cy="686.6" r="2.2" fill="none" stroke="#62b862" stroke-width="0.85"/><circle cx="632.7" cy="710" r="4.8" fill="none" stroke="#62b862" stroke-width="0.85"/><circle cx="632.7" cy="710" r="2.2" fill="none" stroke="#62b862" stroke-width="0.85"/><circle cx="643.8" cy="721.6" r="4.8" fill="none" stroke="#62b862" stroke-width="0.85"/><circle cx="643.8" cy="721.6" r="2.2" fill="none" stroke="#62b862" stroke-width="0.85"/><circle cx="623.6" cy="581.5" r="4.8" fill="none" stroke="#62b862" stroke-width="0.85"/><circle cx="623.6" cy="581.5" r="2.2" fill="none" stroke="#62b862" stroke-width="0.85"/><circle cx="809.5" cy="610.6" r="4.8" fill="none" stroke="#62b862" stroke-width="0.85"/><circle cx="809.5" cy="610.6" r="2.2" fill="none" stroke="#62b862" stroke-width="0.85"/><circle cx="871.7" cy="617" r="4.8" fill="none" stroke="#62b862" stroke-width="0.85"/><circle cx="871.7" cy="617" r="2.2" fill="none" stroke="#62b862" stroke-width="0.85"/><circle cx="884" cy="629.5" r="4.8" fill="none" stroke="#62b862" stroke-width="0.85"/><circle cx="884" cy="629.5" r="2.2" fill="none" stroke="#62b862" stroke-width="0.85"/><circle cx="884" cy="687.6" r="4.8" fill="none" stroke="#62b862" stroke-width="0.85"/><circle cx="884" cy="687.6" r="2.2" fill="none" stroke="#62b862" stroke-width="0.85"/><circle cx="872.5" cy="696.7" r="4.8" fill="none" stroke="#62b862" stroke-width="0.85"/><circle cx="872.5" cy="696.7" r="2.2" fill="none" stroke="#62b862" stroke-width="0.85"/><circle cx="805.6" cy="692.3" r="4.8" fill="none" stroke="#62b862" stroke-width="0.85"/><circle cx="805.6" cy="692.3" r="2.2" fill="none" stroke="#62b862" stroke-width="0.85"/><circle cx="794" cy="724.7" r="4.8" fill="none" stroke="#62b862" stroke-width="0.85"/><circle cx="794" cy="724.7" r="2.2" fill="none" stroke="#62b862" stroke-width="0.85"/><circle cx="782.7" cy="734.5" r="4.8" fill="none" stroke="#62b862" stroke-width="0.85"/><circle cx="782.7" cy="734.5" r="2.2" fill="none" stroke="#62b862" stroke-width="0.85"/><circle cx="797" cy="701.5" r="4.8" fill="none" stroke="#62b862" stroke-width="0.85"/><circle cx="797" cy="701.5" r="2.2" fill="none" stroke="#62b862" stroke-width="0.85"/><path d="M532.5,266 L532.5,286" stroke="#62b862" stroke-width="0.85"/><path d="M540,259.5 L562,261.5" stroke="#62b862" stroke-width="0.85"/><path d="M532.5,320 L532.5,340" stroke="#62b862" stroke-width="0.85"/><path d="M545,349 L567,351" stroke="#62b862" stroke-width="0.85"/><path d="M610,347 L632,349" stroke="#62b862" stroke-width="0.85"/><path d="M858,289 L880,291" stroke="#62b862" stroke-width="0.85"/><path d="M889,298 L889,320" stroke="#62b862" stroke-width="0.85"/><path d="M889,350 L889,374" stroke="#62b862" stroke-width="0.85"/><path d="M860,380 L882,382" stroke="#62b862" stroke-width="0.85"/><path d="M797,361 L818,363" stroke="#62b862" stroke-width="0.85"/><path d="M547,580 L568,582" stroke="#62b862" stroke-width="0.85"/><path d="M535,591 L535,612" stroke="#62b862" stroke-width="0.85"/><path d="M535,645 L535,666" stroke="#62b862" stroke-width="0.85"/><path d="M543,673 L563,675" stroke="#62b862" stroke-width="0.85"/><path d="M610,668 L632,670" stroke="#62b862" stroke-width="0.85"/><path d="M638,676 L638,698" stroke="#62b862" stroke-width="0.85"/><path d="M626,700 L626,720" stroke="#62b862" stroke-width="0.85"/><path d="M633,728 L655,730" stroke="#62b862" stroke-width="0.85"/><path d="M799,605 L820,607" stroke="#62b862" stroke-width="0.85"/><path d="M861,610 L882,612" stroke="#62b862" stroke-width="0.85"/><path d="M891,618 L891,640" stroke="#62b862" stroke-width="0.85"/><path d="M891,677 L891,698" stroke="#62b862" stroke-width="0.85"/><path d="M862,703 L884,705" stroke="#62b862" stroke-width="0.85"/><path d="M795,687 L816,689" stroke="#62b862" stroke-width="0.85"/><path d="M787,715 L787,735" stroke="#62b862" stroke-width="0.85"/><path d="M772,740 L794,742" stroke="#62b862" stroke-width="0.85"/><path d="M805,692 L805,712" stroke="#62b862" stroke-width="0.85"/><path d="M527,297 V308 M527,302.5 H543 M536,297 V308 M540,300 L546,294 M541,305 L547,299" stroke="#62b862" stroke-width="0.85" fill="none"/><path d="M580,359 H592 M582,352 L590,344 M584,354 L592,346 M586,350 V365 M578,364 H594" stroke="#62b862" stroke-width="0.85" fill="none"/><path d="M705,263 H716 V273 H705Z M710.5,273 V280 M708,266 H713 V270 H708Z" stroke="#62b862" stroke-width="0.85" fill="none"/><path d="M865,329 V342 M872,331 V345 M872,336 H886 M886,330 V344 M898,332 V346" stroke="#62b862" stroke-width="0.85" fill="none"/><path d="M838,357 V380 M833,357 H843 M833,380 H843 M833,353 H843 M835,385 H845" stroke="#62b862" stroke-width="0.85" fill="none"/><path d="M525,624 V633 M525,628.5 H540 M533,624 V633 M537,626 L543,620 M538,631 L544,625" stroke="#62b862" stroke-width="0.85" fill="none"/><path d="M588,671 V688 M583,675 H593 M583,686 H593 M585,680 L593,672 M584,693 H594" stroke="#62b862" stroke-width="0.85" fill="none"/><path d="M840.6,598 V631 M835,598 H846 M835,631 H846 M836,593 H846 M837,637 H847" stroke="#62b862" stroke-width="0.85" fill="none"/><path d="M883,660 H892 M892,654 V667 M901,654 V668" stroke="#62b862" stroke-width="0.85" fill="none"/><path d="M839,694 V713 M834,702 H844 M834,711 H844 M835,700 L843,692 M835,715 H845" stroke="#62b862" stroke-width="0.85" fill="none"/><path d="M713,725 V740 M708,740 H718 M708,746 H718 M708,725 H718" stroke="#62b862" stroke-width="0.85" fill="none"/><path d="M788,484 V494 M788,489 H815 M806,484 V495 M814,484 V495" stroke="#62b862" stroke-width="0.85" fill="none"/><path d="M609,463 V470 M613,463 V471 M613,467 H625" stroke="#62b862" stroke-width="0.85" fill="none"/></g></svg><div class="a" style="left:1338px;top:202.3px;font-size:15px;line-height:15px;color:#2a9e2a;white-space:nowrap">FPS:</div><div class="a" style="left:1397px;top:202.3px;font-size:15px;line-height:15px;color:#2a9e2a;white-space:nowrap">4.7</div><div class="a" style="left:1338px;top:221.2px;font-size:13px;line-height:13px;color:#2a9e2a;white-space:nowrap;letter-spacing:0.3px">OpenGL ES2</div><div class="a" style="left:0px;top:776px;width:1445px;height:15px;background:#6e6e6e"></div><div class="a" style="left:0px;top:776px;width:160px;height:15px;background:#4a4a4a"></div><div class="a" style="left:1px;top:776px;width:1px;height:15px;background:#7a7a7a"></div><div class="a" style="left:19px;top:776px;width:55px;height:14px;background:#5e5e5e;border:1px solid #7a7a7a;border-top:none;border-radius:0 0 3px 3px"></div><svg style="left:23px;top:776px" width="14" height="14" viewBox="0 0 14 14"><circle cx="5" cy="5" r="3.5" fill="#fff" stroke="#222"/><rect x="4" y="6" width="6" height="6" fill="#ddd" stroke="#222"/><circle cx="9" cy="9" r="3.5" fill="#fff" stroke="#222"/></svg><div class="t" style="left:37px;top:777px;color:#e8e8e8">Model</div><div class="a" style="left:76px;top:776px;width:58px;height:14px;background:#565656;border-radius:0 0 3px 3px"></div><svg style="left:80px;top:777px" width="12" height="13" viewBox="0 0 12 13"><path d="M1 1H7L10 4V12H1Z" fill="#fff" stroke="#222"/><text x="3.5" y="10" font-size="6" font-family="Liberation Sans" fill="#1a4ad0" font-weight="bold">1</text></svg><div class="t" style="left:94px;top:777px;color:#a8a8a8">Paper 1</div><div class="a" style="left:156px;top:776px;width:3px;height:15px;background:#f4f4f4"></div><div class="a" style="left:160px;top:776px;width:15px;height:14px;background:#555;border:1px solid #3c3c3c"></div><svg style="left:165px;top:779px" width="5" height="8" viewBox="0 0 5 8"><path d="M4.5 0.5V7L1 3.75Z" fill="#fff"/></svg><div class="a" style="left:732px;top:776px;width:195px;height:14px;background:#555;border:1px solid #3f3f3f"></div><div class="a" style="left:1416px;top:776px;width:14px;height:14px;background:#555;border:1px solid #3c3c3c"></div><svg style="left:1421px;top:779px" width="5" height="8" viewBox="0 0 5 8"><path d="M0.5 0.5V7L4 3.75Z" fill="#fff"/></svg><div class="a" style="left:1430px;top:776px;width:15px;height:14px;background:#555;border:1px solid #444"></div><div class="a" style="left:0px;top:791px;width:1445px;height:34px;background:#474747"></div><div class="a" style="left:0px;top:791px;width:1445px;height:1px;background:#5a5a5a"></div><div class="a" style="left:1px;top:792px;width:1443px;height:33px;border-left:1px solid #3a3a3a"></div><svg style="left:4px;top:796px" width="4" height="28" viewBox="0 0 4 28"><rect x="1" y="1" width="1.6" height="1.6" fill="#8a8a8a"/><rect x="1" y="4" width="1.6" height="1.6" fill="#8a8a8a"/><rect x="1" y="7" width="1.6" height="1.6" fill="#8a8a8a"/><rect x="1" y="10" width="1.6" height="1.6" fill="#8a8a8a"/><rect x="1" y="13" width="1.6" height="1.6" fill="#8a8a8a"/><rect x="1" y="16" width="1.6" height="1.6" fill="#8a8a8a"/><rect x="1" y="19" width="1.6" height="1.6" fill="#8a8a8a"/><rect x="1" y="22" width="1.6" height="1.6" fill="#8a8a8a"/></svg><svg style="left:10px;top:798px" width="24" height="22" viewBox="0 0 24 22"><path d="M3 7 V12 Q3 17 9 17 H14" fill="none" stroke="#e02010" stroke-width="2"/><circle cx="3" cy="8" r="1.8" fill="#e02010"/><circle cx="8.5" cy="17" r="1.8" fill="#e02010"/><circle cx="14" cy="17" r="1.8" fill="#e02010"/><path d="M8 8 L18 15" stroke="#f0e030" stroke-width="1.5"/><path d="M11 5l1 -2l1 2l-1 1z M16 3l1 -2l1 2l-1 1z M19 8l1 -2l1 2l-1 1z M14 8 l1-1.5l1 1.5l-1 1z" fill="#fff"/></svg><svg style="left:36px;top:800px" width="18" height="18" viewBox="0 0 18 18"><path d="M2 2L16 16M16 2L2 16" stroke="#999" stroke-width="2"/></svg><svg style="left:59px;top:799px" width="19" height="17" viewBox="0 0 19 17"><rect x="1" y="1" width="17" height="15" fill="none" stroke="#aaa"/><rect x="1" y="1" width="17" height="3" fill="#999"/><path d="M3 7H16M3 10H16M3 13H16M7 5V15M12 5V15" stroke="#aaa"/></svg><div class="a" style="left:82px;top:797px;width:2px;height:23px;background:#333;border-right:1px solid #666"></div><div class="t" style="left:88px;top:794px;color:#f0f0f0">Scale X</div><div class="a" style="left:88px;top:806px;width:78px;height:18px;background:#474747;border:1px solid #7c7c7c"></div><div class="t" style="left:91px;top:809px;color:#6c6c6c">1</div><div class="a" style="left:151px;top:807px;width:14px;height:8px;background:#545454;border:1px solid #222"></div><div class="a" style="left:151px;top:815px;width:14px;height:8px;background:#545454;border:1px solid #222"></div><svg style="left:155px;top:809px" width="6" height="4" viewBox="0 0 6 4"><path d="M0.5 3.5H5.5L3 0.5Z" fill="#ddd"/></svg><svg style="left:155px;top:817px" width="6" height="4" viewBox="0 0 6 4"><path d="M0.5 0.5H5.5L3 3.5Z" fill="#ddd"/></svg><div class="t" style="left:169px;top:794px;color:#f0f0f0">Scale Y</div><div class="a" style="left:169px;top:806px;width:78px;height:18px;background:#474747;border:1px solid #7c7c7c"></div><div class="t" style="left:172px;top:809px;color:#6c6c6c">1</div><div class="a" style="left:232px;top:807px;width:14px;height:8px;background:#545454;border:1px solid #222"></div><div class="a" style="left:232px;top:815px;width:14px;height:8px;background:#545454;border:1px solid #222"></div><svg style="left:236px;top:809px" width="6" height="4" viewBox="0 0 6 4"><path d="M0.5 3.5H5.5L3 0.5Z" fill="#ddd"/></svg><svg style="left:236px;top:817px" width="6" height="4" viewBox="0 0 6 4"><path d="M0.5 0.5H5.5L3 3.5Z" fill="#ddd"/></svg><div class="t" style="left:250px;top:794px;color:#f0f0f0">Size X</div><div class="a" style="left:250px;top:806px;width:78px;height:18px;background:#474747;border:1px solid #7c7c7c"></div><div class="t" style="left:253px;top:809px;color:#6c6c6c">0 in</div><div class="t" style="left:331px;top:794px;color:#f0f0f0">Size Y</div><div class="a" style="left:331px;top:806px;width:78px;height:18px;background:#474747;border:1px solid #7c7c7c"></div><div class="t" style="left:334px;top:809px;color:#6c6c6c">0 in</div><div class="t" style="left:412px;top:794px;color:#f0f0f0">Pos X</div><div class="a" style="left:412px;top:806px;width:78px;height:18px;background:#474747;border:1px solid #7c7c7c"></div><div class="t" style="left:415px;top:809px;color:#6c6c6c">0 in</div><div class="t" style="left:492px;top:794px;color:#f0f0f0">Pos Y</div><div class="a" style="left:492px;top:806px;width:78px;height:18px;background:#474747;border:1px solid #7c7c7c"></div><div class="t" style="left:495px;top:809px;color:#6c6c6c">0 in</div><div class="t" style="left:573px;top:794px;color:#f0f0f0">Delta X</div><div class="a" style="left:573px;top:806px;width:78px;height:18px;background:#474747;border:1px solid #7c7c7c"></div><div class="t" style="left:576px;top:809px;color:#6c6c6c">0 in</div><div class="t" style="left:654px;top:794px;color:#f0f0f0">Delta Y</div><div class="a" style="left:654px;top:806px;width:78px;height:18px;background:#474747;border:1px solid #7c7c7c"></div><div class="t" style="left:657px;top:809px;color:#6c6c6c">0 in</div><div class="t" style="left:735px;top:794px;color:#f0f0f0">Rot</div><div class="a" style="left:735px;top:806px;width:78px;height:18px;background:#474747;border:1px solid #7c7c7c"></div><div class="t" style="left:738px;top:809px;color:#6c6c6c">0</div><div class="a" style="left:798px;top:807px;width:14px;height:8px;background:#545454;border:1px solid #222"></div><div class="a" style="left:798px;top:815px;width:14px;height:8px;background:#545454;border:1px solid #222"></div><svg style="left:802px;top:809px" width="6" height="4" viewBox="0 0 6 4"><path d="M0.5 3.5H5.5L3 0.5Z" fill="#ddd"/></svg><svg style="left:802px;top:817px" width="6" height="4" viewBox="0 0 6 4"><path d="M0.5 0.5H5.5L3 3.5Z" fill="#ddd"/></svg><div class="t" style="left:816px;top:794px;color:#f0f0f0">Delta Distance</div><div class="a" style="left:816px;top:806px;width:78px;height:18px;background:#474747;border:1px solid #7c7c7c"></div><div class="t" style="left:819px;top:809px;color:#6c6c6c">0 in</div><div class="t" style="left:897px;top:794px;color:#f0f0f0">Delta Angle</div><div class="a" style="left:897px;top:806px;width:78px;height:18px;background:#474747;border:1px solid #7c7c7c"></div><div class="t" style="left:900px;top:809px;color:#6c6c6c">0</div><div class="a" style="left:960px;top:807px;width:14px;height:8px;background:#545454;border:1px solid #222"></div><div class="a" style="left:960px;top:815px;width:14px;height:8px;background:#545454;border:1px solid #222"></div><svg style="left:964px;top:809px" width="6" height="4" viewBox="0 0 6 4"><path d="M0.5 3.5H5.5L3 0.5Z" fill="#ddd"/></svg><svg style="left:964px;top:817px" width="6" height="4" viewBox="0 0 6 4"><path d="M0.5 0.5H5.5L3 3.5Z" fill="#ddd"/></svg><div class="a" style="left:974px;top:797px;width:2px;height:24px;background:#333;border-right:1px solid #666"></div><div class="a" style="left:1054px;top:797px;width:2px;height:24px;background:#333;border-right:1px solid #666"></div><div class="a" style="left:1156px;top:797px;width:2px;height:24px;background:#333;border-right:1px solid #666"></div><svg style="left:983px;top:800px" width="20" height="17" viewBox="0 0 20 17"><rect x="2" y="9" width="6" height="6" fill="none" stroke="#eee" stroke-width="1.2"/><path d="M5 9 L9 3 H17 V7 L9 9" fill="none" stroke="#eee" stroke-width="1.2"/><ellipse cx="11" cy="6" rx="3" ry="1.5" fill="none" stroke="#ccc" stroke-width="0.8"/></svg><svg style="left:1008px;top:800px" width="19" height="17" viewBox="0 0 19 17"><rect x="1" y="1" width="5" height="5" fill="none" stroke="#eee" stroke-width="1.1"/><path d="M2 16 L15 2" stroke="#ddd" stroke-width="1.1"/><path d="M9 11H15V16H9Z M9 11L11 9H17V14L15 16 M15 11L17 9" fill="none" stroke="#eee" stroke-width="1.1"/></svg><svg style="left:1033px;top:800px" width="16" height="16" viewBox="0 0 16 16"><path d="M1 10 Q4 3 10 5" fill="none" stroke="#ddd" stroke-width="1.2"/><circle cx="6.5" cy="5.5" r="1.6" fill="#4aa0ff"/><path d="M8 7 L8 14 L10 12 L11.5 15 L12.5 14.5 L11 11.5 L13.5 11.5Z" fill="#fff"/></svg><div class="a" style="left:1059px;top:797px;width:22px;height:23px;background:#6a80a8"></div><svg style="left:1063px;top:801px" width="15" height="15" viewBox="0 0 15 15"><rect x="0.5" y="0.5" width="14" height="14" fill="none" stroke="#fff"/><path d="M1.5 1.5H13.5V13.5Z" fill="#11dd11"/><path d="M1.5 1.5V13.5H13.5Z" fill="#0e7a7a"/></svg><svg style="left:1086px;top:800px" width="16" height="16" viewBox="0 0 16 16"><path d="M1 2 V15 H14 Z" fill="#0e7a7a" stroke="#fff" stroke-width="1.3"/><rect x="9" y="1" width="6" height="4" rx="2" fill="none" stroke="#ddd"/></svg><svg style="left:1110px;top:800px" width="16" height="16" viewBox="0 0 16 16"><path d="M1 2 V15 H14 Z" fill="#11dd11" stroke="#fff" stroke-width="1.3" stroke-dasharray="1.5 1"/><circle cx="12" cy="4" r="2.5" fill="none" stroke="#ddd"/></svg><svg style="left:1135px;top:800px" width="16" height="16" viewBox="0 0 16 16"><path d="M1 3 H9 V8 H5 V10 H9 V14 H5" fill="#11dd11" stroke="#fff" stroke-width="1.2"/><rect x="1" y="3" width="5" height="5" fill="#11dd11"/><path d="M12 2 V6" stroke="#ddd" stroke-width="1.2"/></svg><svg style="left:1163px;top:800px" width="16" height="16" viewBox="0 0 16 16"><path d="M3 4 A5 5 0 1 1 9 13" fill="none" stroke="#9a9a9a" stroke-width="1.6"/><path d="M1 1 L5 6 L1 6Z" fill="#9a9a9a"/><path d="M9 8 L9 16 L11 14 L13 16Z" fill="#9a9a9a"/></svg><svg style="left:1187px;top:800px" width="18" height="17" viewBox="0 0 18 17"><path d="M2 2 L9 6 L5 9Z" fill="#e01010"/><path d="M15 8 L9 14 L16 14Z" fill="#6fa5f0"/><g fill="#c8c020"><rect x="1" y="1" width="2" height="2"/><rect x="14" y="1" width="2" height="2"/><rect x="8" y="7" width="2" height="2"/><rect x="1" y="14" width="2" height="2"/><rect x="14" y="14" width="2" height="2"/></g></svg><svg style="left:1212px;top:800px" width="16" height="16" viewBox="0 0 16 16"><path d="M1 10 L5 2 L9 10Z" fill="none" stroke="#fff" stroke-width="1.3"/><path d="M5 14 L9.5 5 L14 14Z" fill="none" stroke="#e01010" stroke-width="1.8"/></svg><svg style="left:1236px;top:800px" width="16" height="16" viewBox="0 0 16 16"><rect x="4.5" y="1.5" width="7" height="5" fill="none" stroke="#9a9a9a"/><path d="M6 6.5V9 M10 6.5V9 M1 9H15V14H1Z M3 11H13" fill="none" stroke="#9a9a9a" stroke-width="1.2"/></svg><svg style="left:1259px;top:799px" width="17" height="17" viewBox="0 0 17 17"><rect x="1.5" y="1.5" width="14" height="14" fill="none" stroke="#bbb" stroke-width="1.5"/><path d="M2 15 L15 2" stroke="#e01010" stroke-width="1.5"/><rect x="1" y="6" width="3" height="3" fill="#6fa5f0"/><rect x="6" y="13" width="3" height="3" fill="#6fa5f0"/><rect x="1" y="13" width="3" height="3" fill="#6fa5f0"/></svg><svg style="left:1284px;top:799px" width="17" height="17" viewBox="0 0 17 17"><rect x="1.5" y="1.5" width="14" height="14" fill="none" stroke="#9a9a9a" stroke-width="1.5"/><path d="M8.5 3V14M3 8.5H14" stroke="#9a9a9a"/><circle cx="8.5" cy="8.5" r="2.5" fill="#9a9a9a"/></svg><svg style="left:1308px;top:799px" width="17" height="17" viewBox="0 0 17 17"><rect x="2" y="6" width="9" height="9" fill="none" stroke="#9a9a9a" stroke-width="1.4"/><circle cx="6.5" cy="10.5" r="1.8" fill="#9a9a9a"/><path d="M8 6 Q10 2 14 3" fill="none" stroke="#9a9a9a" stroke-width="1.2"/><circle cx="15" cy="3" r="1.5" fill="#9a9a9a"/></svg><svg style="left:1332px;top:799px" width="17" height="17" viewBox="0 0 17 17"><rect x="2" y="7" width="9" height="8" fill="none" stroke="#9a9a9a" stroke-width="1.4"/><path d="M6 11 H13 M13 7 V15 M13 2 V6 M11 4H15" stroke="#9a9a9a" stroke-width="1.2"/></svg><svg style="left:1356px;top:799px" width="17" height="17" viewBox="0 0 17 17"><path d="M2 14H15V2" fill="none" stroke="#fff" stroke-width="1.5"/><path d="M2 7 L15 2" stroke="#e01010" stroke-width="1.6"/><g fill="#6fa5f0"><rect x="0.5" y="5.5" width="3" height="3"/><rect x="13.5" y="0.5" width="3" height="3"/><rect x="0.5" y="12.5" width="3" height="3"/><rect x="13.5" y="12.5" width="3" height="3"/></g></svg><svg style="left:1380px;top:799px" width="17" height="17" viewBox="0 0 17 17"><rect x="1.5" y="1.5" width="14" height="14" fill="none" stroke="#9a9a9a" stroke-width="1.5"/><rect x="4" y="4" width="9" height="9" fill="none" stroke="#6fa5f0" stroke-width="1"/><path d="M2 15 L15 2" stroke="#e01010" stroke-width="1.5"/><g fill="#6fa5f0"><rect x="3" y="3" width="2.5" height="2.5"/><rect x="11.5" y="11.5" width="2.5" height="2.5"/></g></svg><div class="a" style="left:0px;top:825px;width:1445px;height:23px;background:#4b4b4b"></div><div class="t" style="left:7px;top:829px;">Select object(s)</div><div class="t" style="left:1043px;top:832px;">SNAP</div><div class="t" style="left:1076px;top:832px;">GEO</div><div class="a" style="left:1109px;top:830px;width:7px;height:7px;border:1px solid #ddd"></div><div class="t" style="left:1109px;top:836px;font-size:8px;color:#9ab">X</div><div class="a" style="left:1118px;top:829px;width:63px;height:16px;background:#262626;border:1px solid #9a9a9a"></div><div class="t" style="left:1123px;top:832px;">10.19 in</div><div class="a" style="left:1189px;top:830px;width:7px;height:7px;border:1px solid #ddd"></div><div class="t" style="left:1189px;top:836px;font-size:8px;color:#9ab">Y</div><div class="a" style="left:1197px;top:829px;width:62px;height:16px;background:#262626;border:1px solid #9a9a9a"></div><div class="t" style="left:1202px;top:832px;">4.31 in</div><div class="a" style="left:1268px;top:830px;width:7px;height:7px;border:1px solid #ddd"></div><div class="t" style="left:1268px;top:836px;font-size:8px;color:#9ab">Z</div><div class="a" style="left:1276px;top:829px;width:63px;height:16px;background:#262626;border:1px solid #9a9a9a"></div><div class="t" style="left:1281px;top:832px;">0 in</div><div class="t" style="left:1348px;top:829px;">58%</div><div class="t" style="left:1396px;top:829px;">11:31 AM</div></body></html>
